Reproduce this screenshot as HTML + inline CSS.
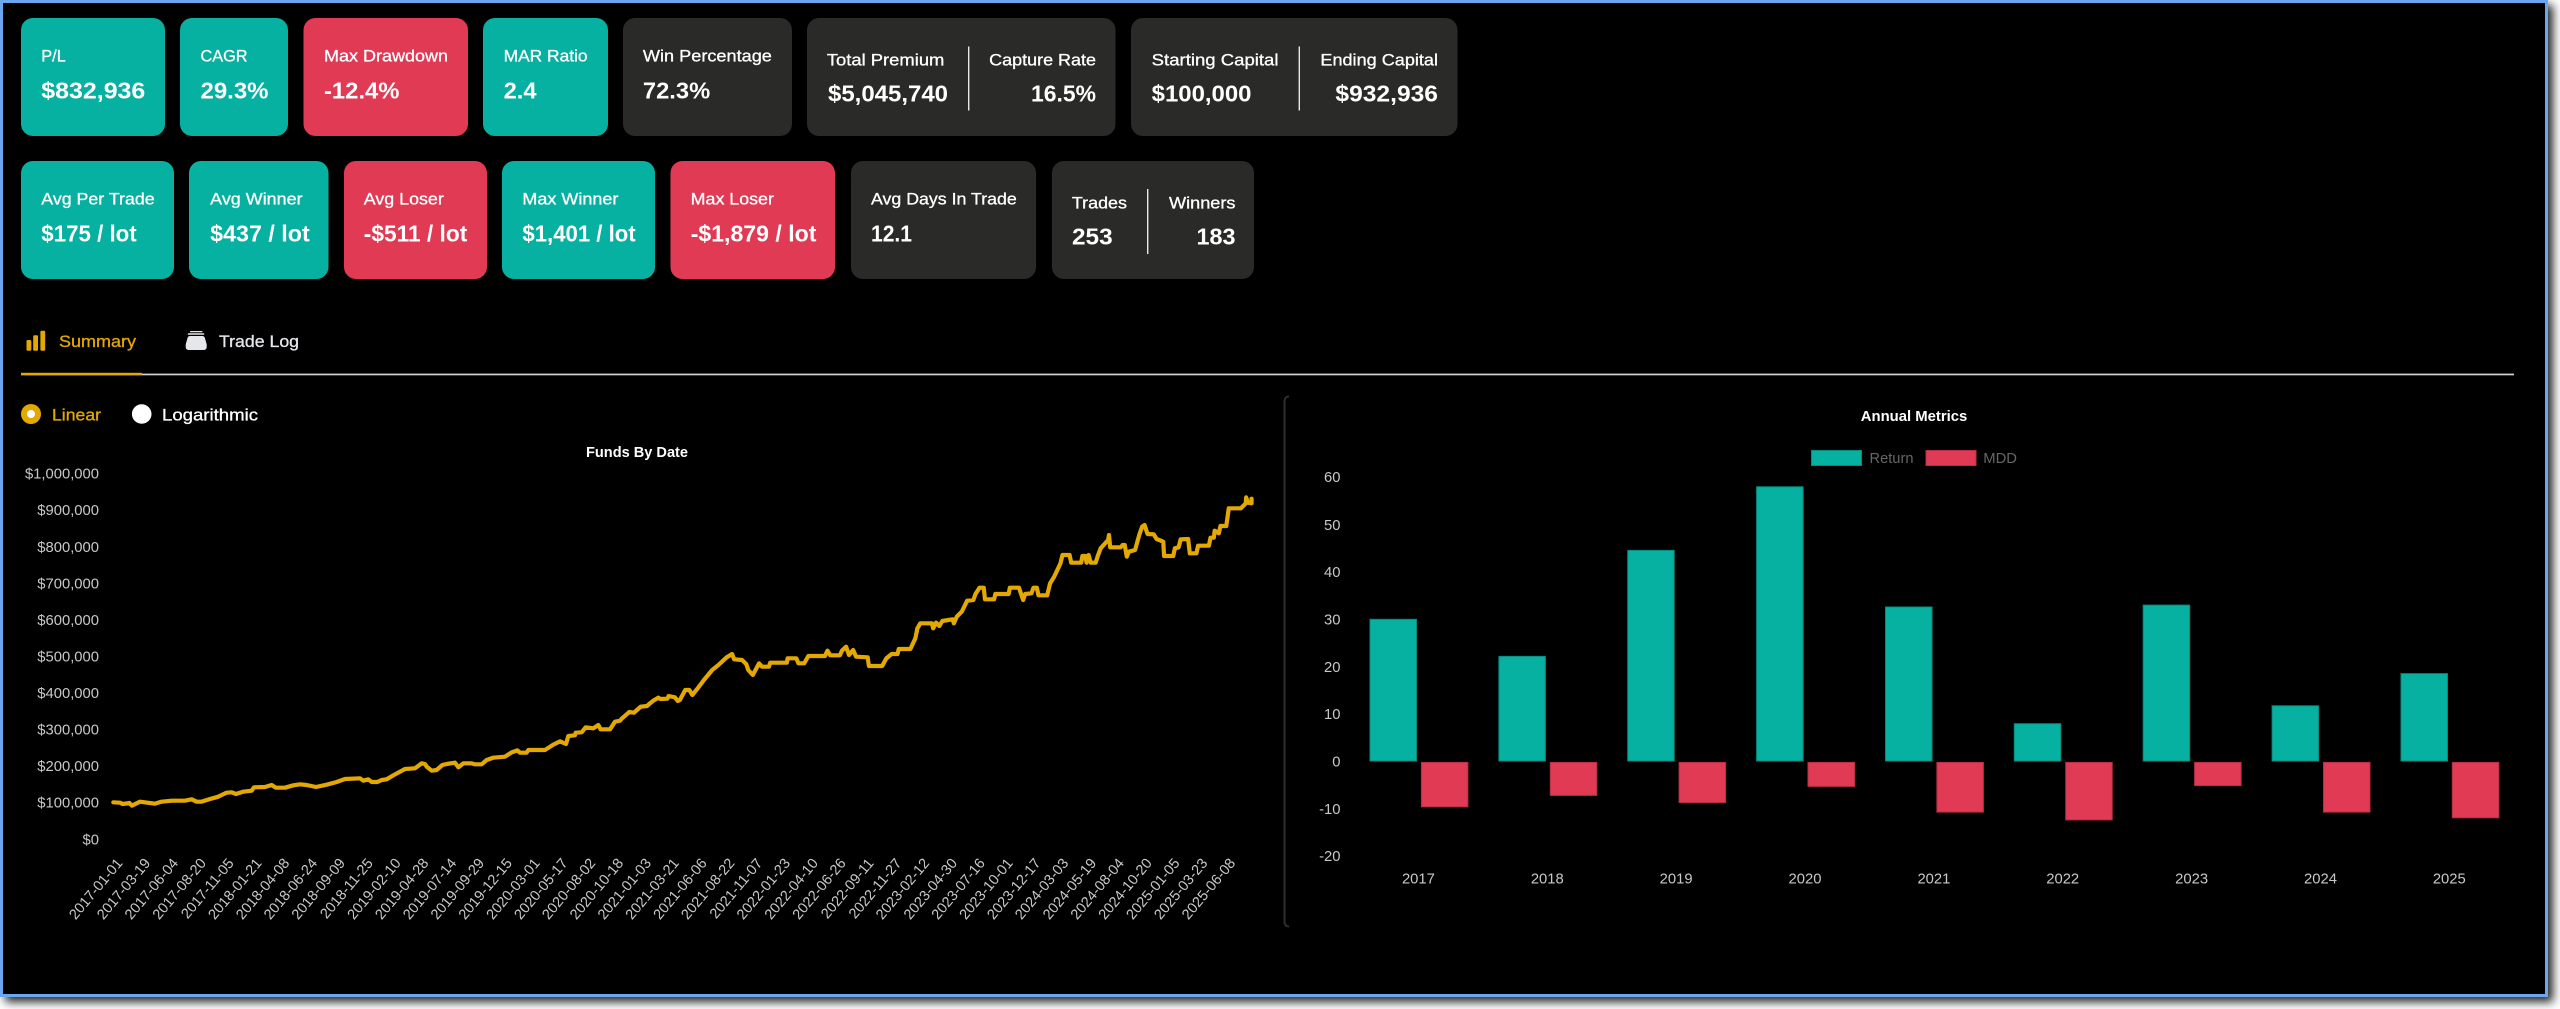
<!DOCTYPE html>
<html lang="en">
<head>
<meta charset="utf-8">
<title>Backtest Summary</title>
<style>
html,body{margin:0;padding:0;width:2560px;height:1009px;overflow:hidden;background:#fff}
#win{position:absolute;left:0;top:0;width:2548px;height:996.5px;box-sizing:border-box;background:#000;border:3px solid #6ba6f0;box-shadow:5px 5px 9px rgba(0,0,0,.85)}
svg{position:absolute;left:0;top:0;display:block}
text{font-family:"Liberation Sans",Arial,sans-serif}
.l{font-size:16.5px;fill:#fff;stroke:#fff;stroke-width:.3px}
.v{font-size:23px;fill:#fff;font-weight:700}
.g{fill:#07b1a1}.r{fill:#e03a54}.d{fill:#2a2a29}
.t{font-size:14.8px;fill:#c8c8c8}
.x{font-size:14.5px;fill:#c8c8c8;text-anchor:end}
.h{font-size:14.6px;fill:#fff;font-weight:700}
.bg{fill:#07b1a1;stroke:#088a7f;stroke-width:1}
.br{fill:#e03a54;stroke:#b53046;stroke-width:1}
</style>
</head>
<body>
<div id="win"></div>
<svg width="2560" height="1009" viewBox="0 0 2560 1009" xmlns="http://www.w3.org/2000/svg">
<!-- Row 1 cards -->
<rect class="g" x="21" y="18" width="144" height="118" rx="12"/>
<rect class="g" x="180" y="18" width="108" height="118" rx="12"/>
<rect class="r" x="303.5" y="18" width="164.5" height="118" rx="12"/>
<rect class="g" x="483" y="18" width="125" height="118" rx="12"/>
<rect class="d" x="623" y="18" width="169" height="118" rx="12"/>
<rect class="d" x="807" y="18" width="308.5" height="118" rx="12"/>
<rect class="d" x="1131" y="18" width="326.5" height="118" rx="12"/>
<!-- Row 2 cards -->
<rect class="g" x="21" y="161" width="153" height="118" rx="12"/>
<rect class="g" x="189" y="161" width="139.5" height="118" rx="12"/>
<rect class="r" x="344" y="161" width="143" height="118" rx="12"/>
<rect class="g" x="502" y="161" width="153" height="118" rx="12"/>
<rect class="r" x="670.5" y="161" width="164.5" height="118" rx="12"/>
<rect class="d" x="851" y="161" width="185" height="118" rx="12"/>
<rect class="d" x="1052" y="161" width="202" height="118" rx="12"/>
<!-- Dividers -->
<rect x="968" y="46.5" width="1.4" height="64" fill="#e8e8e8"/>
<rect x="1298.6" y="46.5" width="1.4" height="64" fill="#e8e8e8"/>
<rect x="1147" y="189" width="1.4" height="65" fill="#e8e8e8"/>
<!-- Row 1 text -->
<text class="l" x="41.3" y="61.7" textLength="24.5" lengthAdjust="spacingAndGlyphs">P/L</text>
<text class="v" x="41.3" y="98.3" textLength="104" lengthAdjust="spacingAndGlyphs">$832,936</text>
<text class="l" x="200.5" y="61.7" textLength="47" lengthAdjust="spacingAndGlyphs">CAGR</text>
<text class="v" x="200.5" y="98.3" textLength="68" lengthAdjust="spacingAndGlyphs">29.3%</text>
<text class="l" x="324" y="61.7" textLength="124" lengthAdjust="spacingAndGlyphs">Max Drawdown</text>
<text class="v" x="324" y="98.3" textLength="75.5" lengthAdjust="spacingAndGlyphs">-12.4%</text>
<text class="l" x="503.6" y="61.7" textLength="84" lengthAdjust="spacingAndGlyphs">MAR Ratio</text>
<text class="v" x="503.6" y="98.3" textLength="33" lengthAdjust="spacingAndGlyphs">2.4</text>
<text class="l" x="642.9" y="61.7" textLength="129" lengthAdjust="spacingAndGlyphs">Win Percentage</text>
<text class="v" x="642.9" y="98.3" textLength="67.3" lengthAdjust="spacingAndGlyphs">72.3%</text>
<text class="l" x="826.8" y="65.3" textLength="117.6" lengthAdjust="spacingAndGlyphs">Total Premium</text>
<text class="v" x="828" y="101.7" textLength="120" lengthAdjust="spacingAndGlyphs">$5,045,740</text>
<text class="l" x="989.2" y="65.3" textLength="106.8" lengthAdjust="spacingAndGlyphs">Capture Rate</text>
<text class="v" x="1031" y="101.7" textLength="65" lengthAdjust="spacingAndGlyphs">16.5%</text>
<text class="l" x="1151.7" y="65.3" textLength="126.8" lengthAdjust="spacingAndGlyphs">Starting Capital</text>
<text class="v" x="1151.7" y="101.7" textLength="99.8" lengthAdjust="spacingAndGlyphs">$100,000</text>
<text class="l" x="1320.4" y="65.3" textLength="117.6" lengthAdjust="spacingAndGlyphs">Ending Capital</text>
<text class="v" x="1335.4" y="101.7" textLength="102.6" lengthAdjust="spacingAndGlyphs">$932,936</text>
<!-- Row 2 text -->
<text class="l" x="41.3" y="204.7" textLength="113.3" lengthAdjust="spacingAndGlyphs">Avg Per Trade</text>
<text class="v" x="41.3" y="241.3" textLength="95.4" lengthAdjust="spacingAndGlyphs">$175 / lot</text>
<text class="l" x="210.2" y="204.7" textLength="92.4" lengthAdjust="spacingAndGlyphs">Avg Winner</text>
<text class="v" x="210.2" y="241.3" textLength="99.5" lengthAdjust="spacingAndGlyphs">$437 / lot</text>
<text class="l" x="363.8" y="204.7" textLength="80" lengthAdjust="spacingAndGlyphs">Avg Loser</text>
<text class="v" x="363.8" y="241.3" textLength="103.5" lengthAdjust="spacingAndGlyphs">-$511 / lot</text>
<text class="l" x="522.4" y="204.7" textLength="96" lengthAdjust="spacingAndGlyphs">Max Winner</text>
<text class="v" x="522.4" y="241.3" textLength="113.3" lengthAdjust="spacingAndGlyphs">$1,401 / lot</text>
<text class="l" x="690.7" y="204.7" textLength="83.2" lengthAdjust="spacingAndGlyphs">Max Loser</text>
<text class="v" x="690.7" y="241.3" textLength="125.7" lengthAdjust="spacingAndGlyphs">-$1,879 / lot</text>
<text class="l" x="871" y="204.7" textLength="145.8" lengthAdjust="spacingAndGlyphs">Avg Days In Trade</text>
<text class="v" x="871" y="241.3" textLength="41" lengthAdjust="spacingAndGlyphs">12.1</text>
<text class="l" x="1071.9" y="208.3" textLength="55.1" lengthAdjust="spacingAndGlyphs">Trades</text>
<text class="v" x="1072" y="244.7" textLength="40.6" lengthAdjust="spacingAndGlyphs">253</text>
<text class="l" x="1169" y="208.3" textLength="66.5" lengthAdjust="spacingAndGlyphs">Winners</text>
<text class="v" x="1196.5" y="244.7" textLength="39" lengthAdjust="spacingAndGlyphs">183</text>
<!-- Tabs -->
<g fill="#e3a900">
<rect x="26.5" y="340" width="4.8" height="10.8" rx="1.2"/>
<rect x="33.2" y="335.3" width="4.8" height="15.5" rx="1.2"/>
<rect x="40.4" y="330.7" width="4.8" height="20.1" rx="1.2"/>
</g>
<text class="l" x="59" y="347" textLength="77" lengthAdjust="spacingAndGlyphs" style="fill:#e3a900;stroke:#e3a900">Summary</text>
<g fill="#e5e7eb">
<rect x="190" y="331" width="12.5" height="1.3" rx=".6"/>
<rect x="187.7" y="333.2" width="16.6" height="1.6" rx=".8"/>
<path d="M190 336h12.4c1.2 0 2 .6 2.4 1.8l1.6 5.4c.2.6.3 1.2.3 1.9v1.900c0 1.800-1.200 3-3 3H188.700c-1.800 0-3-1.200-3-3v-1.900c0-.7.1-1.300.3-1.900l1.600-5.400c.4-1.200 1.200-1.800 2.400-1.800z"/>
</g>
<text class="l" x="219" y="347" textLength="80" lengthAdjust="spacingAndGlyphs" style="fill:#e5e7eb;stroke:#e5e7eb">Trade Log</text>
<rect x="142" y="373.6" width="2372" height="1.7" fill="#d4d4d4"/>
<rect x="21" y="372.8" width="121" height="2.6" fill="#e3a900"/>
<!-- Radios -->
<circle cx="31" cy="414" r="10" fill="#e3a900"/>
<circle cx="31" cy="414" r="4" fill="#fff"/>
<text class="l" x="52" y="420.3" textLength="49" lengthAdjust="spacingAndGlyphs" style="fill:#e3a900;stroke:#e3a900">Linear</text>
<circle cx="141.7" cy="414" r="9.8" fill="#fff"/>
<text class="l" x="162" y="420.3" textLength="96" lengthAdjust="spacingAndGlyphs">Logarithmic</text>
<!-- Funds chart -->
<text class="h" x="586" y="457" textLength="102" lengthAdjust="spacingAndGlyphs">Funds By Date</text>
<g class="t" text-anchor="end">
<text x="99" y="478.6">$1,000,000</text>
<text x="99" y="515.2">$900,000</text>
<text x="99" y="551.8">$800,000</text>
<text x="99" y="588.3">$700,000</text>
<text x="99" y="624.9">$600,000</text>
<text x="99" y="661.5">$500,000</text>
<text x="99" y="698">$400,000</text>
<text x="99" y="734.6">$300,000</text>
<text x="99" y="771.2">$200,000</text>
<text x="99" y="807.7">$100,000</text>
<text x="99" y="844.3">$0</text>
</g>
<g fill="none" stroke="#e3a900" stroke-width="4.2" stroke-linejoin="round" stroke-linecap="round">
<polyline transform="translate(110,670) scale(.33333,.33333)" style="vector-effect:non-scaling-stroke" points="10,397 30,398 38,402 58,399 66,407 90,395 135,401 155,395 185,392 225,392 245,388 260,395 275,395 300,387 325,380 350,368 365,367 378,372 400,365 425,362 432,352 465,351 485,345 497,353 525,353 550,346 570,343 590,345 618,351 650,344 680,336 705,327 750,325 760,332 775,328 785,336 802,336 815,330 830,328 850,316 885,297 915,295 935,280 945,282 950,290 965,302 980,300 997,285 1015,281 1035,278 1045,292 1060,280 1085,280 1095,283 1115,283 1130,270 1150,263 1185,260 1205,247 1222,241 1230,248 1250,248 1255,240 1305,240 1330,224 1350,214 1368,222 1375,198 1395,196 1397,188 1415,187 1427,172 1450,175 1465,165 1472,178 1500,178 1515,155 1530,152 1535,146 1550,133 1558,126 1572,128 1592,110 1611,108 1620,100"/>
<polyline transform="translate(650,440) scale(.41459,.33333)" style="vector-effect:non-scaling-stroke" points="0,790 8,782 20,773 25,777 42,776 45,768 60,772 67,783 72,780 85,750 95,750 102,765 115,745 130,720 150,690 165,675 185,652 198,642 203,658 222,660 232,672 237,690 248,705 263,670 270,680 287,680 290,668 330,668 332,655 353,655 358,670 372,670 382,648 422,648 428,632 435,646 458,646 463,632 473,620 480,645 490,630 497,650 525,652 528,678 560,678 570,655 583,642 597,642 600,627 628,627 640,595 645,565 652,550 680,550 683,565 690,548 698,558 705,543 730,538 733,550 740,530 752,515 765,482 780,480 785,462 795,443 805,443 808,478 830,478 833,462 865,462 868,443 890,443 900,480 905,462 920,460 925,443 933,443 937,466 958,466 965,430 975,410 990,370 995,345 1012,345 1016,368 1040,368 1043,348 1050,348 1053,368 1058,345 1063,368 1075,368 1080,348 1087,325 1105,300 1107,285 1110,322 1135,322 1140,315 1145,315 1150,350 1155,335 1170,330 1180,285 1187,260 1193,255 1200,282 1215,283 1222,297 1238,305 1240,348 1262,348 1266,325 1275,322 1280,298 1298,297 1302,340 1318,340 1322,317 1348,317 1352,293 1360,293 1362,272 1372,280 1376,258 1390,258 1396,205 1425,205 1437,190 1438,172 1442,188 1451,190 1451,176"/>
</g>
<g class="x">
<text transform="translate(123.3,863.5) rotate(-50)">2017-01-01</text>
<text transform="translate(151.12,863.5) rotate(-50)">2017-03-19</text>
<text transform="translate(178.94,863.5) rotate(-50)">2017-06-04</text>
<text transform="translate(206.76,863.5) rotate(-50)">2017-08-20</text>
<text transform="translate(234.58,863.5) rotate(-50)">2017-11-05</text>
<text transform="translate(262.4,863.5) rotate(-50)">2018-01-21</text>
<text transform="translate(290.22,863.5) rotate(-50)">2018-04-08</text>
<text transform="translate(318.04,863.5) rotate(-50)">2018-06-24</text>
<text transform="translate(345.86,863.5) rotate(-50)">2018-09-09</text>
<text transform="translate(373.68,863.5) rotate(-50)">2018-11-25</text>
<text transform="translate(401.5,863.5) rotate(-50)">2019-02-10</text>
<text transform="translate(429.32,863.5) rotate(-50)">2019-04-28</text>
<text transform="translate(457.14,863.5) rotate(-50)">2019-07-14</text>
<text transform="translate(484.96,863.5) rotate(-50)">2019-09-29</text>
<text transform="translate(512.78,863.5) rotate(-50)">2019-12-15</text>
<text transform="translate(540.6,863.5) rotate(-50)">2020-03-01</text>
<text transform="translate(568.42,863.5) rotate(-50)">2020-05-17</text>
<text transform="translate(596.24,863.5) rotate(-50)">2020-08-02</text>
<text transform="translate(624.06,863.5) rotate(-50)">2020-10-18</text>
<text transform="translate(651.88,863.5) rotate(-50)">2021-01-03</text>
<text transform="translate(679.7,863.5) rotate(-50)">2021-03-21</text>
<text transform="translate(707.52,863.5) rotate(-50)">2021-06-06</text>
<text transform="translate(735.34,863.5) rotate(-50)">2021-08-22</text>
<text transform="translate(763.16,863.5) rotate(-50)">2021-11-07</text>
<text transform="translate(790.98,863.5) rotate(-50)">2022-01-23</text>
<text transform="translate(818.8,863.5) rotate(-50)">2022-04-10</text>
<text transform="translate(846.62,863.5) rotate(-50)">2022-06-26</text>
<text transform="translate(874.44,863.5) rotate(-50)">2022-09-11</text>
<text transform="translate(902.26,863.5) rotate(-50)">2022-11-27</text>
<text transform="translate(930.08,863.5) rotate(-50)">2023-02-12</text>
<text transform="translate(957.9,863.5) rotate(-50)">2023-04-30</text>
<text transform="translate(985.72,863.5) rotate(-50)">2023-07-16</text>
<text transform="translate(1013.54,863.5) rotate(-50)">2023-10-01</text>
<text transform="translate(1041.36,863.5) rotate(-50)">2023-12-17</text>
<text transform="translate(1069.18,863.5) rotate(-50)">2024-03-03</text>
<text transform="translate(1097,863.5) rotate(-50)">2024-05-19</text>
<text transform="translate(1124.82,863.5) rotate(-50)">2024-08-04</text>
<text transform="translate(1152.64,863.5) rotate(-50)">2024-10-20</text>
<text transform="translate(1180.46,863.5) rotate(-50)">2025-01-05</text>
<text transform="translate(1208.28,863.5) rotate(-50)">2025-03-23</text>
<text transform="translate(1236.1,863.5) rotate(-50)">2025-06-08</text>
</g>
<!-- Annual panel -->
<path d="M1289 396.5C1286 396.5 1284.5 398.500 1284.5 401.500V921.500C1284.5 924.500 1286 926.500 1289 926.500" fill="none" stroke="#2e2e2e" stroke-width="2"/>
<text class="h" x="1860.8" y="421" textLength="106.5" lengthAdjust="spacingAndGlyphs">Annual Metrics</text>
<rect class="bg" x="1811.5" y="450.5" width="50" height="15"/>
<text x="1869.5" y="462.8" font-size="14.8" fill="#666" textLength="44" lengthAdjust="spacingAndGlyphs">Return</text>
<rect class="br" x="1926" y="450.5" width="50" height="15"/>
<text x="1983.3" y="462.8" font-size="14.8" fill="#666" textLength="33.7" lengthAdjust="spacingAndGlyphs">MDD</text>
<g class="t" text-anchor="end">
<text x="1340.5" y="482.2">60</text>
<text x="1340.5" y="530.2">50</text>
<text x="1340.5" y="577.2">40</text>
<text x="1340.5" y="624.5">30</text>
<text x="1340.5" y="672.2">20</text>
<text x="1340.5" y="719.2">10</text>
<text x="1340.5" y="766.6">0</text>
<text x="1340.5" y="814.2">-10</text>
<text x="1340.5" y="861.2">-20</text>
</g>
<g class="t" text-anchor="middle">
<text x="1418.4" y="883.7">2017</text>
<text x="1547.3" y="883.7">2018</text>
<text x="1676.1" y="883.7">2019</text>
<text x="1805" y="883.7">2020</text>
<text x="1933.9" y="883.7">2021</text>
<text x="2062.7" y="883.7">2022</text>
<text x="2191.6" y="883.7">2023</text>
<text x="2320.5" y="883.7">2024</text>
<text x="2449.3" y="883.7">2025</text>
</g>
<g>
<rect class="bg" x="1370" y="619.3" width="46.5" height="141.7"/>
<rect class="bg" x="1498.9" y="656.4" width="46.5" height="104.6"/>
<rect class="bg" x="1627.7" y="550.4" width="46.5" height="210.6"/>
<rect class="bg" x="1756.6" y="486.8" width="46.5" height="274.2"/>
<rect class="bg" x="1885.5" y="607" width="46.5" height="154"/>
<rect class="bg" x="2014.3" y="723.7" width="46.5" height="37.3"/>
<rect class="bg" x="2143.2" y="605.1" width="46.5" height="155.9"/>
<rect class="bg" x="2272.1" y="705.8" width="46.5" height="55.2"/>
<rect class="bg" x="2401" y="673.6" width="46.5" height="87.4"/>
<rect class="br" x="1421.4" y="762.4" width="46.5" height="44.4"/>
<rect class="br" x="1550.3" y="762.4" width="46.5" height="33"/>
<rect class="br" x="1679.1" y="762.4" width="46.5" height="40.1"/>
<rect class="br" x="1808" y="762.4" width="46.5" height="24"/>
<rect class="br" x="1936.9" y="762.4" width="46.5" height="49.7"/>
<rect class="br" x="2065.7" y="762.4" width="46.5" height="57.5"/>
<rect class="br" x="2194.6" y="762.4" width="46.5" height="23.2"/>
<rect class="br" x="2323.5" y="762.4" width="46.5" height="49.7"/>
<rect class="br" x="2452.3" y="762.4" width="46.5" height="55.4"/>
</g>
</svg>
</body>
</html>
